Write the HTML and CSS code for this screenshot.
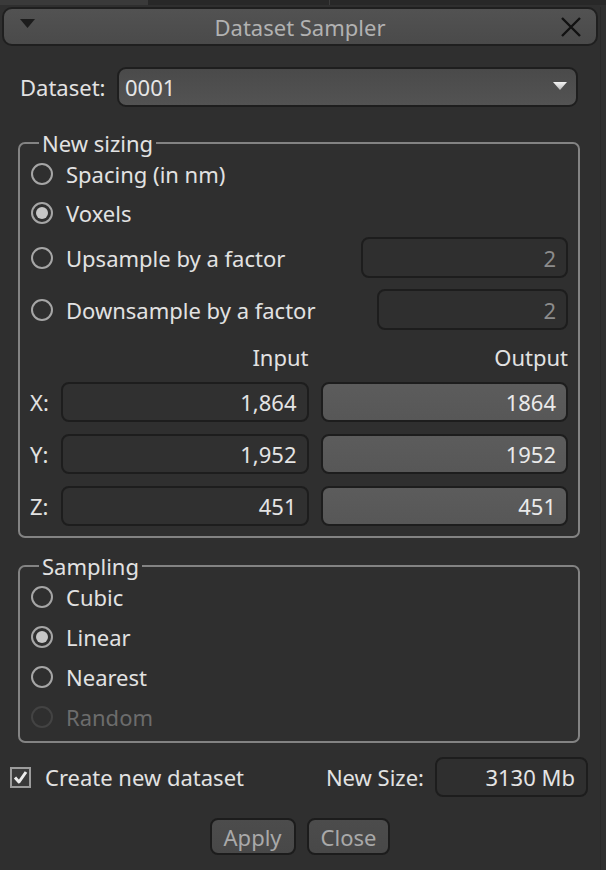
FILE: index.html
```html
<!DOCTYPE html>
<html>
<head>
<meta charset="utf-8">
<title>Dataset Sampler</title>
<link rel="stylesheet" href="styles.css">
</head>
<body>
<div class="page">
  <div class="topstrip"><span class="seg seg-a"></span><span class="seg seg-b"></span><span class="seg seg-c"></span></div>
  <div class="window">
    <div class="titlebar">
      <div class="tb-left">
        <svg class="collapse" width="15" height="9" viewBox="0 0 15 9"><polygon points="0,0 15,0 7.5,9" fill="#1c1c1c"/></svg>
      </div>
      <div class="title">Dataset Sampler</div>
      <div class="tb-right">
        <svg class="close" width="22" height="22" viewBox="0 0 22 22"><path d="M2 2 L20 20 M20 2 L2 20" stroke="#121212" stroke-width="2.4" fill="none"/></svg>
      </div>
    </div>

    <div class="content">
      <div class="dataset-row">
        <span class="lbl">Dataset:</span>
        <div class="combo">
          <span class="combo-text">0001</span>
          <svg class="combo-arrow" width="14" height="8" viewBox="0 0 14 8">
            <defs><linearGradient id="ag" x1="0" y1="0" x2="0" y2="1"><stop offset="0" stop-color="#f4f4f4"/><stop offset="1" stop-color="#b8b8b8"/></linearGradient></defs>
            <polygon points="0,0 14,0 7,8" fill="url(#ag)"/>
          </svg>
        </div>
      </div>

      <fieldset class="group sizing">
        <legend>New sizing</legend>
        <div class="radio-row first"><span class="radio"></span><span class="rlabel">Spacing (in nm)</span></div>
        <div class="radio-row"><span class="radio checked"></span><span class="rlabel">Voxels</span></div>
        <div class="radio-row field-row up"><span class="radio"></span><span class="rlabel">Upsample by a factor</span><div class="field factor up-field">2</div></div>
        <div class="radio-row field-row down"><span class="radio"></span><span class="rlabel">Downsample by a factor</span><div class="field factor down-field">2</div></div>
        <div class="dims head"><span></span><span class="colhead">Input</span><span class="colhead">Output</span></div>
        <div class="dims row-x"><span class="axis">X:</span><div class="field in">1,864</div><div class="field out">1864</div></div>
        <div class="dims row-y"><span class="axis">Y:</span><div class="field in">1,952</div><div class="field out">1952</div></div>
        <div class="dims row-z"><span class="axis">Z:</span><div class="field in">451</div><div class="field out">451</div></div>
      </fieldset>

      <fieldset class="group sampling">
        <legend>Sampling</legend>
        <div class="radio-row s"><span class="radio"></span><span class="rlabel">Cubic</span></div>
        <div class="radio-row s"><span class="radio checked"></span><span class="rlabel">Linear</span></div>
        <div class="radio-row s"><span class="radio"></span><span class="rlabel">Nearest</span></div>
        <div class="radio-row s disabled"><span class="radio"></span><span class="rlabel">Random</span></div>
      </fieldset>

      <div class="bottom-row">
        <span class="checkbox"><svg width="17" height="17" viewBox="0 0 17 17"><path d="M3 8.5 L7 13 L14 3" stroke="#ececec" stroke-width="3" fill="none" stroke-linejoin="round"/></svg></span>
        <span class="cblabel">Create new dataset</span>
        <span class="sizelabel">New Size:</span>
        <div class="field size-field">3130 Mb</div>
      </div>

      <div class="buttons">
        <button class="btn apply">Apply</button>
        <button class="btn close-btn">Close</button>
      </div>
    </div>
  </div>
</div>
</body>
</html>
```

FILE: styles.css
```css
* { box-sizing: border-box; }
html, body {
  margin: 0;
  padding: 0;
  background: #2f2f2f;
}
body {
  font-family: "Noto Sans", "Open Sans", sans-serif;
  font-size: 22px;
  color: #e2e2e2;
  width: 606px;
  height: 870px;
  overflow: hidden;
}
.page {
  width: 606px;
  height: 870px;
  background: #2f2f2f;
}
.topstrip {
  display: flex;
  height: 5px;
  background: #282828;
}
.seg-a { width: 148px; background: #3a3a3a; }
.seg-b { width: 182px; border-right: 1px solid #3c3c3c; }
.seg-c { flex: 1; }

.window {
  width: 601px;
  border-right: 1px solid #282828;
  height: 865px;
}

.titlebar {
  margin: 2px 2px 0 2px;
  height: 39px;
  border: 2px solid #1f1f1f;
  border-radius: 10px;
  background: linear-gradient(#525252, #4a4a4a);
  display: grid;
  grid-template-columns: 1fr auto 1fr;
  align-items: center;
}
.tb-left { padding-left: 16px; display: flex; align-items: center; }
.collapse { margin-top: -6px; }
.title { color: #b2b2b2; font-size: 22px; line-height: 30px; }
.tb-right { display: flex; justify-content: flex-end; padding-right: 14px; }
.close { display: block; }

.content {
  padding: 0 12px 0 10px;
}

.dataset-row {
  margin-top: 21px;
  display: flex;
  align-items: center;
  height: 40px;
  padding-left: 10px;
}
.lbl { width: 97px; }
.combo {
  flex: 1;
  height: 40px;
  margin-right: 10px;
  border: 2px solid #1e1e1e;
  border-radius: 9px;
  background: linear-gradient(#4a4a4a, #535353);
  display: flex;
  align-items: center;
  padding: 0 9px 0 6px;
}
.combo-text { flex: 1; color: #e6e6e6; }
.combo-arrow { margin-top: -2px; }

.group {
  margin: 0 8px 0 8px;
  border: 2px solid #838383;
  border-radius: 7px;
  padding: 0 10px 0 11px;
  min-width: 0;
}
.group legend {
  font-size: 22px;
  line-height: 24px;
  padding: 0 3px;
  margin-left: 8px;
  color: #e2e2e2;
}
.sizing { margin-top: 24px; padding-bottom: 10px; }
.sampling { margin-top: 16px; padding-bottom: 4px; }

.radio-row {
  display: flex;
  align-items: center;
  height: 40px;
}
.radio-row.first { height: 38px; }
.radio-row.field-row { height: 41px; }
.radio-row.up { margin-top: 4px; }
.radio-row.down { margin-top: 11px; }
.radio-row.s:first-of-type { margin-top: -1px; }
.radio {
  width: 22px;
  height: 22px;
  border: 2px solid #a6a6a6;
  border-radius: 50%;
  display: flex;
  align-items: center;
  justify-content: center;
  flex: none;
}
.radio.checked::after {
  content: "";
  width: 12px;
  height: 12px;
  border-radius: 50%;
  background: #c6c6c6;
}
.rlabel { margin-left: 13px; }
.disabled .radio { border-color: #434343; }
.disabled .rlabel { color: #6c6c6c; }

.field {
  height: 40px;
  border: 2px solid #1d1d1d;
  border-radius: 8px;
  display: flex;
  align-items: center;
  justify-content: flex-end;
  padding: 0 10px;
  color: #e4e4e4;
}
.field-row .field { height: 41px; margin-left: auto; }
.factor { color: #8c8c8c; }
.up-field { width: 207px; }
.down-field { width: 191px; }

.dims {
  display: grid;
  grid-template-columns: 18px 1fr 1fr;
  column-gap: 12px;
  align-items: center;
}
.dims.head { margin-top: 15px; height: 24px; line-height: 24px; }
.colhead { text-align: right; padding-right: 0; }
.dims.row-x { margin-top: 13px; }
.dims.row-y, .dims.row-z { margin-top: 12px; }
.axis { margin-left: -1px; }
.field.in { background: #303030; }
.field.out {
  background: linear-gradient(#5c5c5c, #575757);
  color: #eaeaea;
}

.bottom-row {
  margin-top: 14px;
  height: 40px;
  display: flex;
  align-items: center;
}
.checkbox {
  width: 21px;
  height: 21px;
  border: 2px solid #9c9c9c;
  background: #3a3a3a;
  display: flex;
  align-items: center;
  justify-content: center;
  flex: none;
}
.checkbox svg { display: block; }
.cblabel { margin-left: 14px; }
.sizelabel { margin-left: auto; margin-right: 11px; }
.size-field { width: 153px; padding-right: 11px; }

.buttons {
  margin-top: 21px;
  display: flex;
  justify-content: center;
  gap: 11px;
  padding-left: 2px;
}
.btn {
  font-family: "Noto Sans", "Open Sans", sans-serif;
  font-size: 22px;
  height: 37px;
  border: 2px solid #1c1c1c;
  border-radius: 8px;
  background: linear-gradient(#4c4c4c, #484848);
  color: #a9a9a9;
  padding: 0 12px;
  line-height: 30px;
}
```
